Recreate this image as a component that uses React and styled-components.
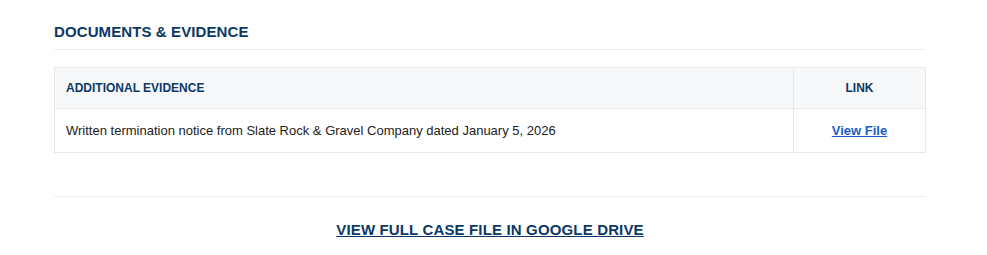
import React from "react";
import styled, { createGlobalStyle } from "styled-components";

const GlobalStyle = createGlobalStyle`
  body {
    margin: 0;
    background: #ffffff;
    font-family: "Liberation Sans", Arial, sans-serif;
  }
`;

const evidence = [
  {
    description:
      "Written termination notice from Slate Rock & Gravel Company dated January 5, 2026",
    href: "#",
  },
];

const Section = styled.section`
  padding: 22px 61px 0 54px;
`;

const Heading = styled.h2`
  margin: 0;
  padding-bottom: 8px;
  border-bottom: 1px solid #ebedf0;
  color: #0b3866;
  font-size: 15px;
  line-height: 19px;
  font-weight: 700;
  letter-spacing: 0.1px;
  text-transform: uppercase;
`;

const Table = styled.table`
  width: 100%;
  margin-top: 17px;
  border-collapse: collapse;
  font-size: 13px;
`;

const HeadCell = styled.th`
  height: 40px;
  padding: 0 11px;
  background: #f7f8fa;
  border: 1px solid #e6e8eb;
  color: #0b3866;
  font-size: 12px;
  font-weight: 700;
  text-transform: uppercase;
  text-align: ${(p) => (p.$center ? "center" : "left")};
  width: ${(p) => p.$width || "auto"};
`;

const Cell = styled.td`
  height: 43px;
  padding: 0 11px;
  border: 1px solid #e6e8eb;
  color: #222222;
  text-align: ${(p) => (p.$center ? "center" : "left")};
`;

const FileLink = styled.a`
  color: #1a5dc8;
  font-weight: 700;
  text-decoration: underline;
`;

const Footer = styled.div`
  margin-top: 43px;
  border-top: 1px solid #ebedf0;
  padding-top: 24px;
  text-align: center;
`;

const DriveLink = styled.a`
  color: #0b3866;
  font-size: 15px;
  font-weight: 700;
  letter-spacing: 0.15px;
  text-decoration: underline;
  text-transform: uppercase;
`;

export default function App() {
  return (
    <>
      <GlobalStyle />
      <Section>
        <Heading>Documents &amp; Evidence</Heading>
        <Table>
          <thead>
            <tr>
              <HeadCell>Additional Evidence</HeadCell>
              <HeadCell $center $width="109px">
                Link
              </HeadCell>
            </tr>
          </thead>
          <tbody>
            {evidence.map((item) => (
              <tr key={item.description}>
                <Cell>{item.description}</Cell>
                <Cell $center>
                  <FileLink href={item.href}>View File</FileLink>
                </Cell>
              </tr>
            ))}
          </tbody>
        </Table>
        <Footer>
          <DriveLink href="#">View Full Case File in Google Drive</DriveLink>
        </Footer>
      </Section>
    </>
  );
}
